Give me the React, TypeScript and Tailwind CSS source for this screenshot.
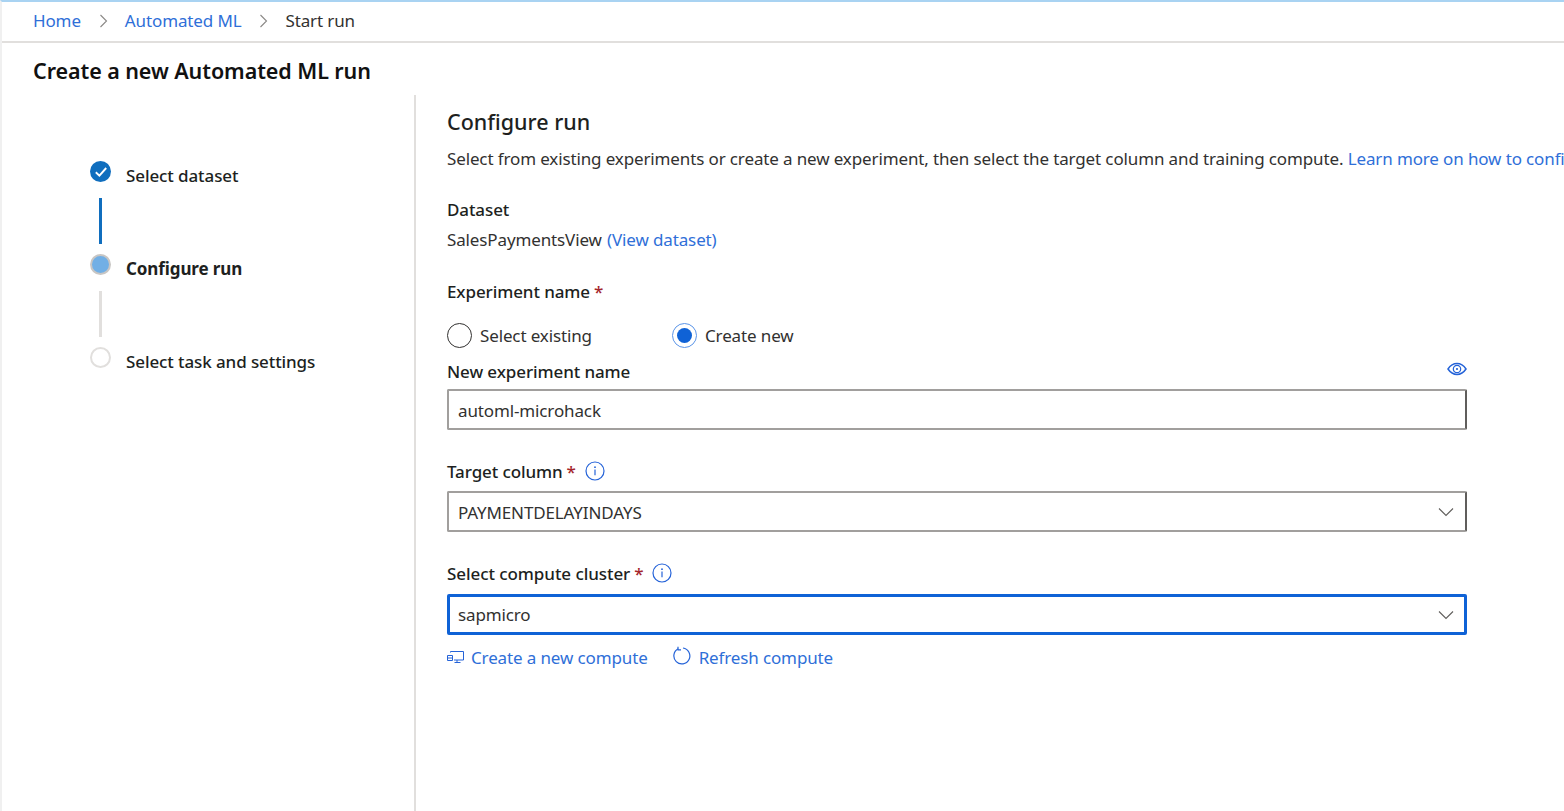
import React from "react";

const font = { fontFamily: '"Noto Sans", "Open Sans", Arial, sans-serif' };

function Req() {
  return <span className="ml-1 text-[#a4262c]">*</span>;
}

function Info() {
  return (
    <svg width="20" height="20" viewBox="0 0 20 20" className="mb-[2px] ml-[9px]" fill="none">
      <circle cx="10" cy="10" r="9" stroke="#2563d8" strokeWidth="1.2" />
      <path d="M10 8.6v5.6" stroke="#2563d8" strokeWidth="1.2" />
      <circle cx="10" cy="6.2" r="0.9" fill="#2563d8" />
    </svg>
  );
}

function Chevron() {
  return (
    <svg width="16" height="10" viewBox="0 0 16 10" fill="none">
      <path d="M1 1.5l7 7 7-7" stroke="#605e5c" strokeWidth="1.1" />
    </svg>
  );
}

function Crumb() {
  return (
    <svg width="9" height="14" viewBox="0 0 9 14" fill="none">
      <path d="M1.5 1l6 6-6 6" stroke="#8a8886" strokeWidth="1.1" />
    </svg>
  );
}

function Step({ label, state }: { label: string; state: "done" | "current" | "todo" }) {
  return (
    <div className="flex h-[23px] items-start pt-[1px]">
      {state === "done" && (
        <span className="flex h-[21px] w-[21px] items-center justify-center rounded-full bg-[#106ebe]">
          <svg width="14" height="12" viewBox="0 0 14 12" fill="none">
            <path d="M1.800 6.200l3.600 3.400 6.800-7.600" stroke="#fff" strokeWidth="1.900" />
          </svg>
        </span>
      )}
      {state === "current" && (
        <span className="h-[21px] w-[21px] rounded-full border-2 border-[#c8c6c4] bg-[#71afe5]" />
      )}
      {state === "todo" && <span className="h-[21px] w-[21px] rounded-full border-2 border-[#e1dfdd] bg-white" />}
      <span
        className={`ml-[15px] mt-[3px] text-[17px] leading-[23px] tracking-[-0.1px] text-[#201f1e] ${
          state === "current" ? "font-bold" : "font-medium"
        }`}
      >
        {label}
      </span>
    </div>
  );
}

function Connector({ active }: { active?: boolean }) {
  return (
    <div className={`mb-[9px] ml-[9px] mt-[15px] h-[46px] w-[3px] ${active ? "bg-[#106ebe]" : "bg-[#e1dfdd]"}`} />
  );
}

function Field({ value, focused }: { value: string; focused?: boolean }) {
  return (
    <div
      className={`flex h-[41px] w-[1020px] items-center justify-between rounded-[2px] bg-white text-[17px] tracking-[-0.13px] text-[#323130] ${
        focused ? "border-[3px] border-[#0f62d6] pl-[8px] pr-[10px]" : "border-2 border-[#a19f9d] border-r-[#605e5c] pl-[9px] pr-[11px]"
      }`}
    >
      <span className={focused ? "" : "pt-[2px]"}>{value}</span>
      <Chevron />
    </div>
  );
}

export default function App() {
  return (
    <div
      className="flex h-[811px] w-[1564px] flex-col overflow-hidden border-l-2 border-t-2 border-l-[#f0f0f0] border-t-[#a9d3f2] bg-white"
      style={font}
    >
      <div className="flex h-[41px] shrink-0 items-center border-b-2 border-[#e1dfdd] pb-[2px] pl-[31px] text-[17px] tracking-[-0.13px]">
        <span className="text-[#2f6fd8]">Home</span>
        <span className="ml-[18px] mr-[17px] flex">
          <Crumb />
        </span>
        <span className="text-[#2f6fd8]">Automated ML</span>
        <span className="ml-[18px] mr-[17px] flex">
          <Crumb />
        </span>
        <span className="text-[#323130]">Start run</span>
      </div>

      <h1 className="h-[52px] shrink-0 pl-[31px] pt-[13px] text-[21.5px] font-semibold leading-[30px] tracking-[-0.07px] text-[#111]">
        Create a new Automated ML run
      </h1>

      <div className="flex min-h-0 flex-1">
        <div className="w-[414px] shrink-0 border-r-2 border-[#e1dfdd] pl-[88px] pt-[65px]">
          <Step label="Select dataset" state="done" />
          <Connector active />
          <Step label="Configure run" state="current" />
          <Connector />
          <Step label="Select task and settings" state="todo" />
        </div>

        <div className="min-w-0 flex-1 pl-[31px] pt-[12px]">
          <h2 className="text-[21.5px] font-medium leading-[30px] text-[#201f1e]">Configure run</h2>
          <p className="mt-[10px] whitespace-nowrap text-[17px] leading-[24px] tracking-[-0.13px] text-[#323130]">
            Select from existing experiments or create a new experiment, then select the target column and training
            compute. <span className="text-[#2f6fd8]">Learn more on how to configure the experiment</span>
          </p>

          <div className="mt-[27px] text-[17px] font-medium leading-[24px] tracking-[-0.1px] text-[#201f1e]">Dataset</div>
          <div className="mt-[6px] text-[17px] leading-[24px] tracking-[-0.13px] text-[#323130]">
            SalesPaymentsView <span className="ml-[1px] text-[#2f6fd8]">(View dataset)</span>
          </div>

          <div className="mt-[28px] text-[17px] font-medium leading-[24px] tracking-[-0.1px] text-[#201f1e]">
            Experiment name
            <Req />
          </div>

          <div className="mt-[18px] flex h-[27px] items-center text-[17px] tracking-[-0.13px] text-[#323130]">
            <span className="h-[25px] w-[25px] rounded-full border border-[#323130]" />
            <span className="ml-[8px] w-[192px]">Select existing</span>
            <span className="flex h-[25px] w-[25px] items-center justify-center rounded-full border border-[#5a94e8]">
              <span className="h-[15px] w-[15px] rounded-full bg-[#0f62d6]" />
            </span>
            <span className="ml-[8px]">Create new</span>
          </div>

          <div className="mt-[11px] flex w-[1020px] items-center justify-between">
            <span className="text-[17px] font-medium leading-[24px] tracking-[-0.1px] text-[#201f1e]">New experiment name</span>
            <svg width="20" height="14" viewBox="0 0 20 14" fill="none" className="mb-[6px]">
              <path d="M1 7c2.400-3.600 5.400-5.400 9-5.400s6.600 1.800 9 5.400c-2.400 3.600-5.400 5.400-9 5.400S3.400 10.600 1 7z" stroke="#2563d8" strokeWidth="1.5" />
              <circle cx="10" cy="7" r="3.700" stroke="#2563d8" strokeWidth="1.200" />
              <circle cx="10" cy="7" r="1.100" fill="#2563d8" />
            </svg>
          </div>

          <div className="mt-[5px] flex h-[41px] w-[1020px] items-center rounded-[2px] border-2 border-[#a19f9d] border-r-[#605e5c] bg-white pl-[9px] pt-[2px] text-[17px] tracking-[-0.13px] text-[#323130]">
            automl-microhack
          </div>

          <div className="mt-[30px] flex h-[24px] items-center text-[17px] font-medium tracking-[-0.1px] text-[#201f1e]">
            Target column
            <Req />
            <Info />
          </div>
          <div className="mt-[7px]">
            <Field value="PAYMENTDELAYINDAYS" />
          </div>

          <div className="mt-[30px] flex h-[24px] items-center text-[17px] font-medium tracking-[-0.07px] text-[#201f1e]">
            Select compute cluster
            <Req />
            <Info />
          </div>
          <div className="mt-[8px]">
            <Field value="sapmicro" focused />
          </div>

          <div className="mt-[11px] flex h-[24px] items-center text-[17px] tracking-[-0.13px] text-[#2f6fd8]">
            <svg width="17" height="14" viewBox="0 0 17 14" fill="none" stroke="#2563d8" strokeWidth="1" className="mb-[3px]">
              <path d="M3.500 2.500V1.500h13v8.500H7M10 10v2.500M7.500 12.500h6" />
              <path d="M.5 5.500h5v5h-5z" />
              <path d="M.5 8h5" />
            </svg>
            <span className="ml-[7px]">Create a new compute</span>
            <svg width="20" height="20" viewBox="0 0 20 20" fill="none" className="mb-[5px] ml-[25px]" stroke="#2563d8" strokeWidth="1.2">
              <path d="M5.200 2.800A8 8 0 1 0 10 2" />
              <path d="M5 .8v3h3" />
            </svg>
            <span className="ml-[6px]">Refresh compute</span>
          </div>
        </div>
      </div>
    </div>
  );
}
